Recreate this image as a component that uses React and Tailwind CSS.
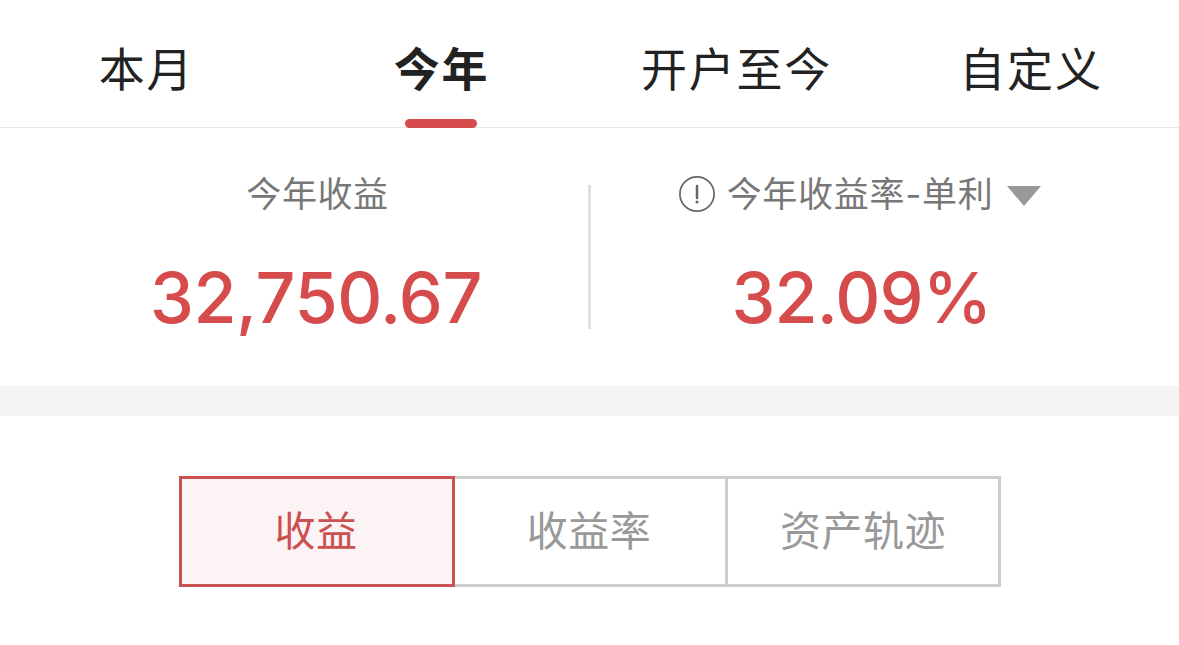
const tabs = [
  { label: '本月', box: 'w-[293px]' },
  { label: '今年', box: 'w-[297px]', active: true },
  { label: '开户至今', box: 'w-[293px]' },
  { label: '自定义', box: 'w-[296px]' },
];

function Tab({ label, box, active }) {
  return (
    <button className={`${box} flex h-32 flex-col items-center justify-between text-[46px] leading-[66px] tracking-[1.8px] text-[#222222] ${active ? 'font-bold' : 'font-normal'}`}>
      <span className="mt-[33px] whitespace-nowrap">{label}</span>
      {active && <span className="mr-px h-[9px] w-[72px] rounded-full bg-[#d64c4c]" />}
    </button>
  );
}

export default function App() {
  return (
    <main className="flex h-[645px] w-[1179px] flex-col overflow-hidden bg-white font-['Noto_Sans_CJK_SC',sans-serif]">
      <nav className="flex h-32 shrink-0 border-b border-[#e8e8e8]">
        {tabs.map((tab) => <Tab key={tab.label} {...tab} />)}
      </nav>
      <section className="flex h-[258px] shrink-0">
        <div className="flex w-[588px] flex-col items-center pl-[47px]">
          <div className="mt-[39px] text-[35px] leading-[50px] tracking-[0.6px] text-[#777777]">今年收益</div>
          <div className="mt-[41px] mr-[3px] font-['Inter',sans-serif] text-[70px] leading-[80px] font-medium tracking-[-0.5px] text-[#d64c4c]">32,750.67</div>
        </div>
        <div className="mt-[57px] h-36 w-[3px] bg-[#e0e0e0]" />
        <div className="flex w-[588px] flex-col items-center pr-[50px]">
          <div className="mt-[39px] flex h-[50px] items-center text-[35px] leading-[50px] tracking-[0.7px] text-[#777777]">
            <svg className="mt-1 mr-3 size-9" viewBox="0 0 36 36" fill="none" stroke="#666" strokeWidth="1.7">
              <circle cx="18" cy="18" r="17.1" />
              <path d="M18 10v12" strokeWidth="2.5" strokeLinecap="round" />
              <circle cx="18" cy="26" r="1.5" fill="#666" stroke="none" />
            </svg>
            <span className="mt-0.5 whitespace-nowrap">今年收益率<span className="font-['Inter',sans-serif]">-</span>单利</span>
            <svg className="mt-2 ml-3.5 h-5 w-[34px]" viewBox="0 0 34 20"><path d="M0 0h34L17 20z" fill="#999" /></svg>
          </div>
          <div className="mt-[41px] ml-[3px] font-['Inter',sans-serif] text-[70px] leading-[80px] font-medium tracking-[-0.9px] text-[#d64c4c]">32.09%</div>
        </div>
      </section>
      <div className="h-[30px] shrink-0 bg-[#f4f4f4]" />
      <section className="mt-[60px] ml-[179px] flex h-[111px] w-[822px] text-[41px] leading-[60px] tracking-[0.5px] text-[#999]">
        <button className="w-[276px] border-3 border-[#c95353] bg-[#fcf3f4] pr-0.5 pb-[7px] text-[#cb5050]">收益</button>
        <button className="w-[273px] border-y-3 border-r-3 border-[#ccc] pr-0.5 pb-[7px]">收益率</button>
        <button className="w-[273px] border-y-3 border-r-3 border-[#ccc] pb-[7px]">资产轨迹</button>
      </section>
    </main>
  );
}
